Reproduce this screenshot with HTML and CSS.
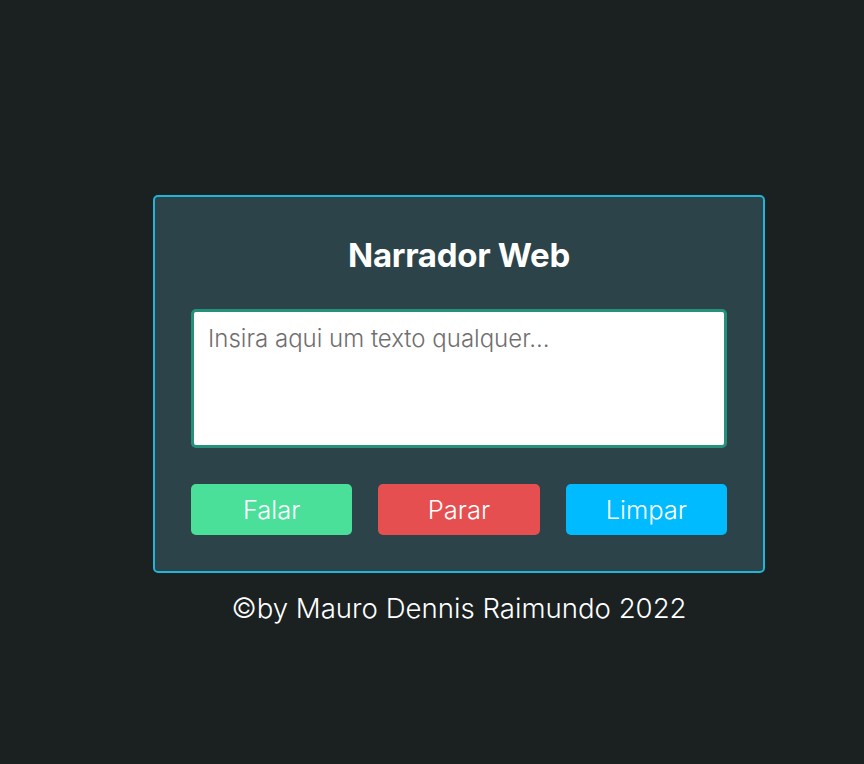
FILE: index.html
```html
<!DOCTYPE html>
<html lang="pt-BR">
<head>
<meta charset="utf-8">
<title>Narrador Web</title>
<link rel="stylesheet" href="styles.css">
</head>
<body>
<main class="page">
  <section class="card">
    <h1 class="title">Narrador Web</h1>
    <textarea class="input" placeholder="Insira aqui um texto qualquer..."></textarea>
    <div class="actions">
      <button class="btn btn-speak">Falar</button>
      <button class="btn btn-stop">Parar</button>
      <button class="btn btn-clear">Limpar</button>
    </div>
  </section>
  <p class="footer">©by Mauro Dennis Raimundo 2022</p>
</main>
</body>
</html>
```
FILE: styles.css
```css
* { box-sizing: border-box; }
html, body { margin: 0; height: 100%; }
body {
  background: #1b2021;
  font-family: Inter, "Noto Sans", sans-serif;
  color: #ffffff;
}
.page {
  padding: 195px 0 0 153px;
  width: 765px;
  display: flex;
  flex-direction: column;
  align-items: stretch;
}
.card {
  width: 612px;
  border: 2px solid #20b4d6;
  border-radius: 5px;
  background: #2c4349;
  padding: 36px;
  display: flex;
  flex-direction: column;
}
.title {
  margin: 0 0 32px;
  text-align: center;
  font-size: 33px;
  font-weight: 700;
  line-height: 44px;
  letter-spacing: -0.3px;
}
.input {
  display: block;
  width: 100%;
  height: 139px;
  border: 3px solid #25917b;
  border-radius: 5px;
  background: #fff;
  padding: 12px 14px;
  font-family: inherit;
  font-size: 24px;
  font-weight: 300;
  resize: none;
  color: #222;
  outline: none;
}
.input::placeholder { color: #6f6f6f; }
.actions {
  margin-top: 36px;
  display: flex;
  gap: 26px;
}
.btn {
  flex: 1;
  height: 51px;
  border: none;
  border-radius: 5px;
  color: #fff;
  font-family: inherit;
  font-size: 25.5px;
  font-weight: 300;
}
.btn-speak { background: #4ae09a; }
.btn-stop { background: #e54f50; }
.btn-clear { background: #00bbff; }
.footer {
  margin: 18px 0 0;
  text-align: center;
  width: 612px;
  font-size: 27.6px;
  font-weight: 300;
}
```
